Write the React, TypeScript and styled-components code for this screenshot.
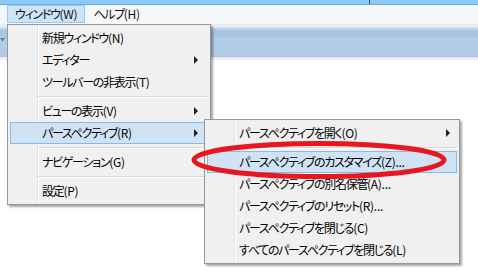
import React from "react";
import styled, { createGlobalStyle, css } from "styled-components";

const GlobalStyle = createGlobalStyle`
  html, body { margin: 0; padding: 0; background: #ffffff; }
  body {
    font-family: "Noto Sans CJK JP", "Noto Sans", sans-serif;
    font-size: 12px;
    font-feature-settings: "palt";
    color: #000;
  }
`;

const Page = styled.div`
  position: relative;
  width: 478px;
  height: 280px;
  overflow: hidden;
  background: #fff;
  display: flex;
  flex-direction: column;
`;

const TopStrip = styled.div`
  position: relative;
  height: 4px;
  background: #8ec8f7;
  border-bottom: 1px solid #6aaee6;
  flex: none;
`;

const TopMark = styled.div`
  position: absolute;
  left: 369px;
  top: 0;
  width: 1px;
  height: 4px;
  background: #3a5670;
`;

const MenuBar = styled.div`
  height: 19px;
  background: #f5f6f7;
  display: flex;
  align-items: stretch;
  padding-left: 7px;
  flex: none;
`;

const MenuBarItem = styled.div<{ $active?: boolean }>`
  display: flex;
  align-items: center;
  padding: 0 7px;
  height: 18px;
  border: 1px solid transparent;
  box-sizing: border-box;
  line-height: 1;
  color: #111;
  ${(p) =>
    p.$active &&
    css`
      background: #cce4f7;
      border-color: #99c9ef;
    `}
`;

const Toolbar = styled.div`
  height: 36px;
  flex: none;
  position: relative;
  background: linear-gradient(
    to bottom,
    #ececef 0px,
    #ececef 1px,
    #e6eef8 1px,
    #e6eef8 3px,
    #c4d7ea 4px,
    #a9c4de 7px,
    #a9c4de 13px,
    #b0cce6 14px,
    #b0cce6 32px,
    #c0bcd8 32px,
    #c0bcd8 33px,
    #e6e6f4 33px,
    #f2f2fa 36px
  );
`;

const Chevron = styled.svg`
  position: absolute;
  left: 0;
  top: 14px;
`;

const Content = styled.div`
  flex: 1;
  background: #fff;
`;

const Panel = styled.div<{ $left: number; $top: number; $width: number }>`
  position: absolute;
  left: ${(p) => p.$left}px;
  top: ${(p) => p.$top}px;
  width: ${(p) => p.$width}px;
  box-sizing: border-box;
  border: 1px solid #979797;
  padding: 2px;
  background:
    linear-gradient(
      to right,
      transparent 29px,
      #e2e3e3 29px,
      #e2e3e3 30px,
      #ffffff 30px,
      #ffffff 31px,
      transparent 31px
    ),
    #f0f0f0;
  box-shadow: 2px 2px 2px rgba(0, 0, 0, 0.35);
  display: flex;
  flex-direction: column;
`;

const Item = styled.div<{ $active?: boolean }>`
  height: 22px;
  box-sizing: border-box;
  display: flex;
  align-items: center;
  padding-left: 31px;
  border: 1px solid transparent;
  white-space: nowrap;
  line-height: 1;
  ${(p) =>
    p.$active &&
    css`
      background: #d0e3f4;
      border-color: #88b9e8;
    `}
`;

const Label = styled.span`
  flex: 1;
`;

const Kana = styled.span`
  letter-spacing: -1.3px;
`;

const Accel = styled.span`
  letter-spacing: -0.3px;
`;

const Arrow = styled.span<{ $gap: number }>`
  width: 0;
  height: 0;
  border-top: 4px solid transparent;
  border-bottom: 4px solid transparent;
  border-left: 4px solid #222;
  margin-right: ${(p) => p.$gap}px;
`;

const Separator = styled.div`
  height: 7px;
  display: flex;
  align-items: center;
  padding-left: 28px;
  &::after {
    content: "";
    flex: 1;
    height: 1px;
    background: #d7d7d7;
    box-shadow: 0 1px 0 #fff;
  }
`;

const Ring = styled.svg`
  position: absolute;
  left: 188px;
  top: 136px;
  pointer-events: none;
`;

type Entry = { label: string; sub?: boolean; active?: boolean } | "sep";

const mainItems: Entry[] = [
  { label: "新規ウィンドウ(N)" },
  { label: "エディター", sub: true },
  { label: "ツールバーの非表示(T)" },
  "sep",
  { label: "ビューの表示(V)", sub: true },
  { label: "パースペクティブ(R)", sub: true, active: true },
  "sep",
  { label: "ナビゲーション(G)" },
  "sep",
  { label: "設定(P)" },
];

const subItems: Entry[] = [
  { label: "パースペクティブを開く(O)", sub: true },
  "sep",
  { label: "パースペクティブのカスタマイズ(Z)...", active: true },
  { label: "パースペクティブの別名保管(A)..." },
  { label: "パースペクティブのリセット(R)..." },
  { label: "パースペクティブを閉じる(C)" },
  { label: "すべてのパースペクティブを閉じる(L)" },
];

function Text({ label }: { label: string }) {
  const m = label.match(/^(.*?)(\(.\)(?:\.\.\.)?)$/);
  if (!m) return <Kana>{label}</Kana>;
  return (
    <>
      <Kana>{m[1]}</Kana>
      <Accel>{m[2]}</Accel>
    </>
  );
}

function MenuList({ items, gap }: { items: Entry[]; gap: number }) {
  return (
    <>
      {items.map((it, i) =>
        it === "sep" ? (
          <Separator key={i} />
        ) : (
          <Item key={i} $active={it.active}>
            <Label>
              <Text label={it.label} />
            </Label>
            {it.sub && <Arrow $gap={gap} />}
          </Item>
        )
      )}
    </>
  );
}

export default function App() {
  return (
    <>
      <GlobalStyle />
      <Page>
        <TopStrip>
          <TopMark />
        </TopStrip>
        <MenuBar>
          <MenuBarItem $active>
            <Text label="ウィンドウ(W)" />
          </MenuBarItem>
          <MenuBarItem>
            <Text label="ヘルプ(H)" />
          </MenuBarItem>
        </MenuBar>
        <Toolbar>
          <Chevron width="6" height="4" viewBox="0 0 6 4">
            <path d="M0 0 H5 L2.5 3.5 Z" fill="#6d7a88" />
          </Chevron>
        </Toolbar>
        <Content />

        <Panel $left={7} $top={24} $width={204}>
          <MenuList items={mainItems} gap={9} />
        </Panel>

        <Panel $left={204} $top={119} $width={256}>
          <MenuList items={subItems} gap={6} />
        </Panel>

        <Ring width="264" height="48" viewBox="0 0 264 48">
          <ellipse
            cx="131"
            cy="24"
            rx="125"
            ry="16.5"
            fill="none"
            stroke="#e8161f"
            strokeWidth="5"
          />
        </Ring>
      </Page>
    </>
  );
}
